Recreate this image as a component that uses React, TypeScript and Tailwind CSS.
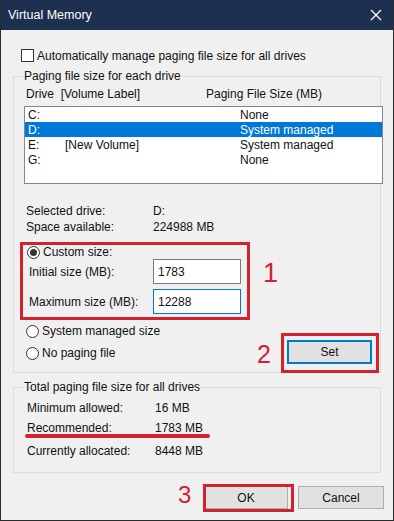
const font = { fontFamily: '"Liberation Sans", Arial, sans-serif' };

function Radio({ checked }: { checked?: boolean }) {
  return (
    <span className="flex h-[13px] w-[13px] items-center justify-center rounded-full border border-[#333] bg-white">
      {checked && <span className="h-[7px] w-[7px] rounded-full bg-[#333]" />}
    </span>
  );
}

const drives = [
  { d: "C:", label: "", size: "None" },
  { d: "D:", label: "", size: "System managed", selected: true },
  { d: "E:", label: "[New Volume]", size: "System managed" },
  { d: "G:", label: "", size: "None" },
];

export default function App() {
  return (
    <div
      className="relative h-[521px] w-[394px] overflow-hidden border-x border-b border-[#2b2b2b] bg-[#f0f0f0] text-[12px] leading-[16px] text-[#111]"
      style={font}
    >
      {/* Title bar */}
      <div className="flex h-[30px] items-center justify-between bg-[#1d3050] pl-[7px] pr-[11px] text-[12.5px] text-white">
        <span>Virtual Memory</span>
        <svg width="12" height="12" viewBox="0 0 12 12" stroke="white" strokeWidth="1.3">
          <path d="M1 1L11 11M11 1L1 11" />
        </svg>
      </div>

      <div className="px-[12px]">
        {/* Auto manage checkbox */}
        <div className="mt-[19px] flex h-[13px] items-center gap-[3px] pl-[8px]">
          <span className="h-[13px] w-[13px] border border-[#333] bg-white" />
          <span>Automatically manage paging file size for all drives</span>
        </div>

        {/* Group 1 */}
        <div className="relative mt-[14px] h-[297px] border border-[#dcdcdc]">
          <span className="absolute -top-[9px] left-[9px] bg-[#f0f0f0] px-px">Paging file size for each drive</span>

          <div className="mt-[9px] flex h-[16px] pl-[12px]">
            <span className="w-[180px]">Drive&nbsp;&nbsp;[Volume Label]</span>
            <span>Paging File Size (MB)</span>
          </div>

          <div className="ml-[10px] mt-[4px] h-[78px] w-[359px] border border-[#828790] bg-white">
            {drives.map((r) => (
              <div
                key={r.d}
                className={`flex h-[15px] items-center pl-[3px] ${r.selected ? "bg-[#0078d7] text-white" : ""}`}
              >
                <span className="w-[37px]">{r.d}</span>
                <span className="w-[175px]">{r.label}</span>
                <span>{r.size}</span>
              </div>
            ))}
          </div>

          <div className="mt-[19px] pl-[12px]">
            <div className="flex h-[16px]">
              <span className="w-[127px]">Selected drive:</span>
              <span>D:</span>
            </div>
            <div className="flex h-[16px]">
              <span className="w-[127px]">Space available:</span>
              <span>224988 MB</span>
            </div>
          </div>

          <div className="mt-[10px] flex h-[14px] items-center gap-[3px] pl-[13px]">
            <Radio checked />
            <span>Custom size:</span>
          </div>
          <div className="flex h-[25px] items-center pl-[15px]">
            <span className="w-[124px]">Initial size (MB):</span>
            <span className="flex h-[25px] w-[88px] items-center border border-[#7a7a7a] bg-white pl-[4px]">1783</span>
          </div>
          <div className="mt-[5px] flex h-[25px] items-center pl-[15px]">
            <span className="w-[124px]">Maximum size (MB):</span>
            <span className="flex h-[25px] w-[88px] items-center border border-[#0078d7] bg-white pl-[4px]">12288</span>
          </div>

          <div className="flex justify-between pl-[12px] pr-[8px]">
            <div>
              <div className="mt-[10px] flex h-[14px] items-center gap-[3px]">
                <Radio />
                <span>System managed size</span>
              </div>
              <div className="mt-[8px] flex h-[14px] items-center gap-[3px]">
                <Radio />
                <span>No paging file</span>
              </div>
            </div>
            <button className="mt-[26px] h-[24px] w-[85px] border-2 border-[#0078d7] bg-[#e1e1e1]">Set</button>
          </div>
        </div>

        {/* Group 2 */}
        <div className="relative mt-[14px] h-[86px] border border-[#dcdcdc]">
          <span className="absolute -top-[9px] left-[9px] bg-[#f0f0f0] px-px">Total paging file size for all drives</span>
          <div className="mt-[12px] pl-[13px]">
            <div className="flex h-[16px]">
              <span className="w-[128px]">Minimum allowed:</span>
              <span>16 MB</span>
            </div>
            <div className="mt-[4px] flex h-[16px]">
              <span className="w-[128px]">Recommended:</span>
              <span>1783 MB</span>
            </div>
            <div className="mt-[7px] flex h-[16px]">
              <span className="w-[128px]">Currently allocated:</span>
              <span>8448 MB</span>
            </div>
          </div>
        </div>
      </div>

      {/* Buttons */}
      <div className="mt-[13px] flex justify-end gap-[10px] pr-[9px]">
        <button className="h-[23px] w-[84px] border border-[#adadad] bg-[#e1e1e1]">OK</button>
        <button className="h-[23px] w-[86px] border border-[#adadad] bg-[#e1e1e1]">Cancel</button>
      </div>

      {/* Annotations */}
      <div className="pointer-events-none absolute left-[19px] top-[242px] h-[78px] w-[230px] border-[3px] border-[#d4212e]" />
      <span className="absolute left-[262px] top-[258px] text-[27px] leading-[30px] text-[#d4212e]">1</span>
      <div className="pointer-events-none absolute left-[280px] top-[333px] h-[40px] w-[98px] border-[3px] border-[#d4212e]" />
      <span className="absolute left-[256px] top-[340px] text-[25px] leading-[28px] text-[#d4212e]">2</span>
      <div className="pointer-events-none absolute left-[24px] top-[434px] h-[4px] w-[185px] rounded-full bg-[#d4212e]" />
      <div className="pointer-events-none absolute left-[202px] top-[484px] h-[28px] w-[91px] border-[3px] border-[#d4212e]" />
      <span className="absolute left-[177px] top-[481px] text-[24px] leading-[28px] text-[#d4212e]">3</span>
    </div>
  );
}
